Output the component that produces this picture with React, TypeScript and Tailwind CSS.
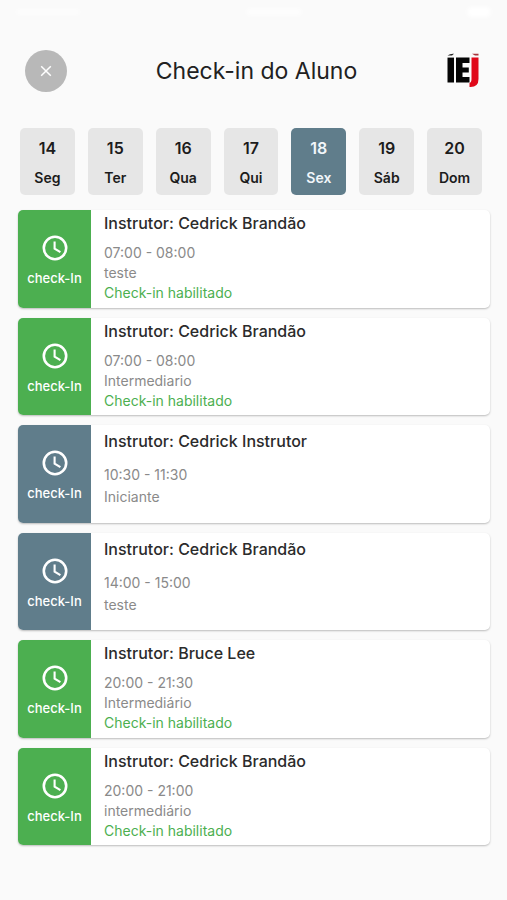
import clsx from "clsx";

const days = [
  { number: 14, label: "Seg" },
  { number: 15, label: "Ter" },
  { number: 16, label: "Qua" },
  { number: 17, label: "Qui" },
  { number: 18, label: "Sex", selected: true },
  { number: 19, label: "Sáb" },
  { number: 20, label: "Dom" },
];

const lessons = [
  { instructor: "Cedrick Brandão", time: "07:00 - 08:00", level: "teste", open: true },
  { instructor: "Cedrick Brandão", time: "07:00 - 08:00", level: "Intermediario", open: true },
  { instructor: "Cedrick Instrutor", time: "10:30 - 11:30", level: "Iniciante", open: false },
  { instructor: "Cedrick Brandão", time: "14:00 - 15:00", level: "teste", open: false },
  { instructor: "Bruce Lee", time: "20:00 - 21:30", level: "Intermediário", open: true },
  { instructor: "Cedrick Brandão", time: "20:00 - 21:00", level: "intermediário", open: true },
];

function Logo() {
  return (
    <svg viewBox="0 0 34 36" className="h-9 w-[34px]" role="img" aria-label="IEJ">
      <path d="M1.5 2.4Q4 0.6 8 0.8L6 2.4Z" fill="#222" />
      <path d="M1.5 4.6H8V29.5H1.5Z" fill="#050505" />
      <path d="M10 4.6H23.5V10H16.5V14.4H22.8V19.4H16.5V24H23.5V29.5H10Z" fill="#050505" />
      <path d="M26 0.8H32.5V2.6H29Z" fill="#a8343b" />
      <path d="M25.5 4.6H32.5V26Q32.5 34 24.5 34H23.5V30Q25.5 29.5 25.5 26Z" fill="#e0091a" />
    </svg>
  );
}

function ClockIcon() {
  return (
    <svg viewBox="0 0 26 26" className="size-[26px]" fill="none" stroke="currentColor" strokeWidth="2.6" aria-hidden="true">
      <circle cx="13" cy="13" r="11.2" />
      <path d="M12.6 6.5V13.6L18.4 17.2" strokeWidth="2.1" />
    </svg>
  );
}

function StatusBar() {
  return (
    <div className="flex h-6 items-center justify-between px-4" aria-hidden="true">
      <span className="h-1.5 w-16 rounded-full bg-white/60 blur-[2px]" />
      <span className="h-2 w-14 rounded-full bg-white/60 blur-[2px]" />
      <span className="h-2.5 w-6 rounded-full bg-white blur-[2px]" />
    </div>
  );
}

export default function App() {
  return (
    <main className="min-h-screen bg-[#fafafa] pb-14 font-['Inter','Liberation_Sans',sans-serif]">
      <StatusBar />

      <header className="mt-[26px] flex items-center justify-between pr-[27px] pl-[25px]">
        <button
          type="button"
          aria-label="Fechar"
          className="flex size-[42px] items-center justify-center rounded-full bg-[#b8b8b8] text-white"
        >
          <svg viewBox="0 0 12 12" className="size-3" fill="none" stroke="currentColor" strokeWidth="1.5" aria-hidden="true">
            <path d="M1.2 1.2L10.8 10.8M10.8 1.2L1.2 10.8" />
          </svg>
        </button>
        <h1 className="text-[23px] leading-8 text-[#212121]">Check-in do Aluno</h1>
        <Logo />
      </header>

      <nav className="mt-9 grid grid-cols-7 gap-[13px] pr-[25px] pl-5">
        {days.map((day) => (
          <button
            key={day.number}
            type="button"
            aria-pressed={!!day.selected}
            className={clsx(
              "flex h-[67px] flex-col items-center rounded-[5px] pt-[10px] font-semibold",
              day.selected ? "bg-[#607d8b] text-[#f1f6fa]" : "bg-[#e6e6e6] text-[#1c1c1c]",
            )}
          >
            <span className="text-base leading-5">{day.number}</span>
            <span className="mt-[10px] text-[14px] leading-5">{day.label}</span>
          </button>
        ))}
      </nav>

      <ul className="mt-[15px] grid min-h-[635px] auto-rows-fr gap-[10px] pr-[17px] pl-[18px]">
        {lessons.map((lesson, i) => (
          <li key={i} className="flex overflow-hidden rounded-[5px] bg-white shadow-[0_1px_2px_rgba(0,0,0,0.25)]">
            <button
              type="button"
              className={clsx(
                "flex w-[73px] shrink-0 flex-col items-center gap-[7px] pt-[25px] text-white",
                lesson.open ? "bg-[#4caf50]" : "bg-[#607d8b]",
              )}
            >
              <ClockIcon />
              <span className="text-[13px] leading-5 font-medium">check-In</span>
            </button>
            <div className={clsx("px-[13px]", lesson.open ? "pt-[3px]" : "pt-[6px]")}>
              <h2 className="text-base leading-5 font-medium text-[#2b2b2b]">
                Instrutor: {lesson.instructor}
              </h2>
              <div
                className={clsx(
                  "text-[14px] text-[#8a8a8a]",
                  lesson.open ? "mt-[10px] leading-5" : "mt-[13px] leading-[22px]",
                )}
              >
                <p>{lesson.time}</p>
                <p>{lesson.level}</p>
                {lesson.open && <p className="text-[#4caf50]">Check-in habilitado</p>}
              </div>
            </div>
          </li>
        ))}
      </ul>
    </main>
  );
}
